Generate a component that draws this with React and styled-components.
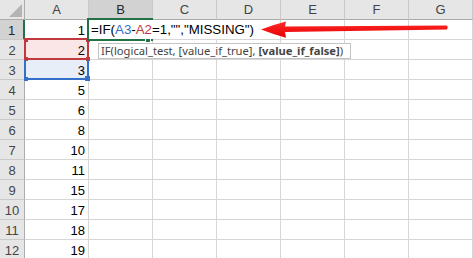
import React from "react";
import styled, { createGlobalStyle, css } from "styled-components";

const GlobalStyle = createGlobalStyle`
  html, body { margin: 0; padding: 0; background: #ffffff; overflow: hidden; }
  * { box-sizing: border-box; }
`;

const Sheet = styled.div`
  position: relative;
  display: grid;
  grid-template-columns: 25px repeat(7, 64px);
  grid-template-rows: repeat(13, 20px);
  width: 473px;
  height: 258px;
  font-family: "Liberation Sans", Arial, sans-serif;
  font-size: 13px;
  color: #000;
  overflow: hidden;
`;

const Corner = styled.div`
  background: #e6e6e6;
  border-right: 1px solid #ababab;
  border-bottom: 1px solid #ababab;
  position: relative;
  svg { position: absolute; right: 2px; bottom: 2px; }
`;

const ColHeader = styled.div`
  background: ${(p) => (p.$selected ? "#d2d2d2" : "#e6e6e6")};
  border-right: 1px solid #c9c9c9;
  border-bottom: ${(p) => (p.$selected ? "2px solid #217346" : "1px solid #ababab")};
  color: ${(p) => (p.$selected ? "#262626" : "#444444")};
  display: flex;
  align-items: center;
  justify-content: center;
  padding-top: ${(p) => (p.$selected ? "1px" : "0")};
  line-height: 1;
`;

const RowHeader = styled.div`
  background: ${(p) => (p.$selected ? "#d2d2d2" : "#e6e6e6")};
  border-bottom: 1px solid #c9c9c9;
  border-right: ${(p) => (p.$selected ? "2px solid #217346" : "1px solid #ababab")};
  color: ${(p) => (p.$selected ? "#262626" : "#444444")};
  display: flex;
  align-items: center;
  justify-content: center;
  padding-top: 1px;
  line-height: 1;
`;

const refColors = {
  red: { line: "#c0393f", fill: "#fbe6e7" },
  blue: { line: "#3470c7", fill: "#e8eef8" },
};

const Cell = styled.div`
  position: relative;
  border-right: 1px solid #d6d6d6;
  border-bottom: 1px solid #d6d6d6;
  display: flex;
  align-items: center;
  justify-content: flex-end;
  padding: 1px 3px 0 0;
  line-height: 1;
  white-space: nowrap;
  background: ${(p) => (p.$ref ? refColors[p.$ref].fill : "transparent")};
`;

const CellValue = styled.span`
  position: relative;
  z-index: 3;
`;

const RefBox = styled.div`
  position: absolute;
  left: -1px;
  right: -1px;
  bottom: -1px;
  top: ${(p) => (p.$color === "red" ? "-2px" : "0")};
  border: 2px solid ${(p) => refColors[p.$color].line};
  ${(p) => p.$color === "blue" && css`border-top: none;`}
  z-index: 2;
  pointer-events: none;
`;

const RefHandle = styled.span`
  position: absolute;
  width: ${(p) => p.$size}px;
  height: ${(p) => p.$size}px;
  background: ${(p) => refColors[p.$color].line};
  ${(p) => (p.$v === "top" ? "top: -2px;" : "bottom: -3px;")}
  ${(p) => (p.$h === "left" ? "left: -2px;" : "right: -3px;")}
`;

const Selection = styled.div`
  position: absolute;
  top: -2px;
  left: -2px;
  right: -1px;
  bottom: -2px;
  border: 2px solid #217346;
  z-index: 4;
  pointer-events: none;
`;

const FillHandle = styled.span`
  position: absolute;
  right: 0px;
  bottom: -4px;
  width: 6px;
  height: 6px;
  background: #217346;
  border: 1px solid #ffffff;
`;

const Editor = styled.div`
  position: absolute;
  left: 0;
  top: 0;
  height: 19px;
  width: 173px;
  background: #ffffff;
  z-index: 5;
  display: flex;
  align-items: center;
  padding: 1px 0 0 2px;
  font-size: 13.3px;
  color: #000;
  line-height: 1;
  white-space: nowrap;
`;

const RefText = styled.span`
  color: ${(p) => refColors[p.$color].line};
`;

const Tooltip = styled.div`
  position: absolute;
  left: 98px;
  top: 43px;
  width: 253px;
  height: 16px;
  background: #ffffff;
  border: 1px solid #c3c3c3;
  color: #444444;
  font-family: "Noto Sans", "Open Sans", sans-serif;
  font-size: 11.2px;
  line-height: 14px;
  padding: 0 2px;
  white-space: nowrap;
  z-index: 6;
  b { font-weight: 700; }
`;

const Arrow = styled.svg`
  position: absolute;
  left: 0;
  top: 0;
  z-index: 7;
  pointer-events: none;
`;

const cols = ["A", "B", "C", "D", "E", "F", "G"];
const values = [1, 2, 3, 5, 6, 8, 10, 11, 15, 17, 18, 19];

export default function App() {
  return (
    <>
      <GlobalStyle />
      <Sheet>
        <Corner>
          <svg width="13" height="13" viewBox="0 0 13 13">
            <polygon points="13,0 13,13 0,13" fill="#b4b4b4" />
          </svg>
        </Corner>
        {cols.map((c) => (
          <ColHeader key={c} $selected={c === "B"}>
            {c}
          </ColHeader>
        ))}
        {values.map((v, i) => {
          const row = i + 1;
          const ref = row === 2 ? "red" : row === 3 ? "blue" : undefined;
          return (
            <React.Fragment key={row}>
              <RowHeader $selected={row === 1}>{row}</RowHeader>
              <Cell $ref={ref}>
                <CellValue>{v}</CellValue>
                {ref === "red" && (
                  <RefBox $color="red">
                    <RefHandle $color="red" $size={4} $v="top" $h="left" />
                    <RefHandle $color="red" $size={4} $v="top" $h="right" />
                    <RefHandle $color="red" $size={4} $v="bottom" $h="left" />
                    <RefHandle $color="red" $size={4} $v="bottom" $h="right" />
                  </RefBox>
                )}
                {ref === "blue" && (
                  <RefBox $color="blue">
                    <RefHandle $color="blue" $size={4} $v="bottom" $h="left" />
                    <RefHandle $color="blue" $size={5} $v="bottom" $h="right" />
                  </RefBox>
                )}
              </Cell>
              {cols.slice(1).map((c) => (
                <Cell key={c}>
                  {row === 1 && c === "B" && (
                    <>
                      <Selection>
                        <FillHandle />
                      </Selection>
                      <Editor>
                        =IF(<RefText $color="blue">A3</RefText>-
                        <RefText $color="red">A2</RefText>=1,"","MISSING")
                      </Editor>
                    </>
                  )}
                </Cell>
              ))}
            </React.Fragment>
          );
        })}
        <Tooltip>
          IF(logical_test, [value_if_true], <b>[value_if_false]</b>)
        </Tooltip>
        <Arrow width="473" height="258" viewBox="0 0 473 258">
          <defs>
            <linearGradient id="ag" x1="0" y1="0" x2="0" y2="1">
              <stop offset="0" stopColor="#ff2a2a" />
              <stop offset="1" stopColor="#e60000" />
            </linearGradient>
          </defs>
          <path
            d="M261,29.5 Q274,24.5 286,21.5 L285,26.6 L447,25.6 Q448.5,27.4 447,29.4 L285,32 L286,37.7 Q274,34.5 261,29.5 Z"
            fill="url(#ag)"
          />
        </Arrow>
      </Sheet>
    </>
  );
}
